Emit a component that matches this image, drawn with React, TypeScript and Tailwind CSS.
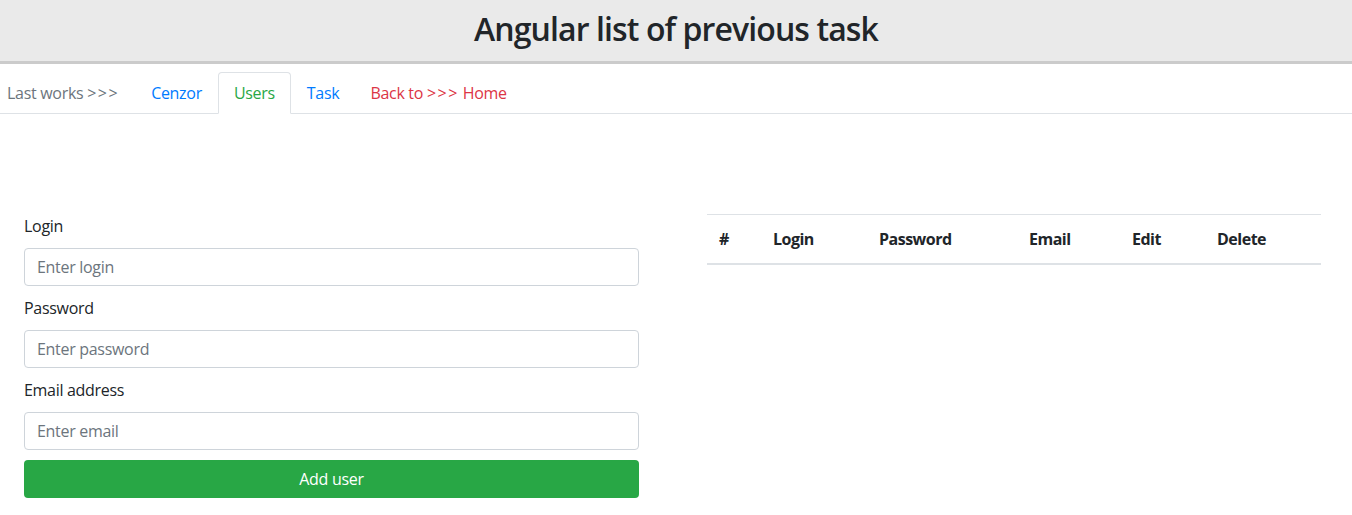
import React from "react";

export default function App() {
  const font = { fontFamily: '"Segoe UI", "Open Sans", "Noto Sans", sans-serif' };
  return (
    <div className="min-h-[515px] bg-white text-[#212529]" style={font}>
      <div className="h-[64px] pb-[4px] bg-[#eaeaea] flex items-center justify-center border-b-[3px] border-[#cbcbcb]">
        <h1 className="text-[32px] font-semibold leading-[38px] text-[#212529] tracking-[-0.9px]">Angular list of previous task</h1>
      </div>
      <div className="mt-[8px] flex items-end border-b border-[#dee2e6] h-[42px] text-[16px] leading-[24px] tracking-[-0.3px]">
        <span className="pl-[7px] pr-[16px] pb-[8px] text-[#6c757d]">Last works <span className="tracking-[1.5px]">&gt;&gt;&gt;</span></span>
        <span className="pl-[16px] pr-[16px] pb-[8px] text-[#007bff]">Cenzor</span>
        <span className="px-[15px] pt-[8px] pb-[8px] text-[#28a745] border border-[#dee2e6] border-b-white rounded-t-[4px] -mb-px bg-white">Users</span>
        <span className="px-[16px] pb-[8px] text-[#007bff]">Task</span>
        <span className="px-[15px] pb-[8px] text-[#dc3545]">Back to <span className="tracking-[1.5px]">&gt;&gt;&gt;</span> Home</span>
      </div>
      <div className="flex pl-[24px] pt-[100px] gap-[68px]">
        <div className="w-[615px] flex flex-col text-[16px] leading-[24px] tracking-[-0.3px]">
          <label className="mb-[10px]">Login</label>
          <div className="h-[38px] border border-[#ced4da] rounded-[4px] px-[12px] flex items-center text-[#6c757d]">Enter login</div>
          <label className="mt-[10px] mb-[10px]">Password</label>
          <div className="h-[38px] border border-[#ced4da] rounded-[4px] px-[12px] flex items-center text-[#6c757d]">Enter password</div>
          <label className="mt-[10px] mb-[10px]">Email address</label>
          <div className="h-[38px] border border-[#ced4da] rounded-[4px] px-[12px] flex items-center text-[#6c757d]">Enter email</div>
          <button className="mt-[10px] h-[38px] bg-[#28a745] text-white rounded-[4px] flex items-center justify-center">Add user</button>
        </div>
        <div className="w-[614px]">
          <div className="flex border-t border-[#dee2e6] border-b-2 h-[51px] items-center font-bold text-[16px] leading-[24px] tracking-[-0.5px]">
            <div className="w-[54px] px-[12px]">#</div>
            <div className="w-[106px] px-[12px]">Login</div>
            <div className="w-[150px] px-[12px]">Password</div>
            <div className="w-[103px] px-[12px]">Email</div>
            <div className="w-[85px] px-[12px]">Edit</div>
            <div className="w-[116px] px-[12px]">Delete</div>
          </div>
        </div>
      </div>
    </div>
  );
}
